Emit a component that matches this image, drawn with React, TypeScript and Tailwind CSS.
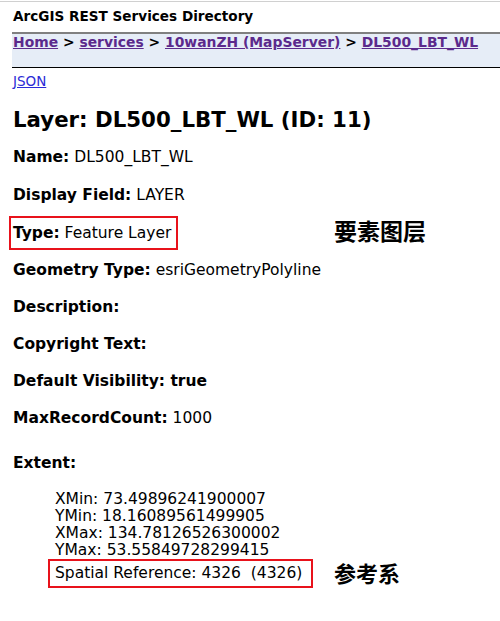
import React from "react";

const V = { fontFamily: '"DejaVu Sans", Verdana, sans-serif' };
const CJK = { fontFamily: '"Noto Sans CJK SC", sans-serif' };

function Row({ label, value }: { label: string; value?: string }) {
  return (
    <div className="text-[15.5px] leading-[17px] text-black whitespace-nowrap">
      <b>{label}</b>
      {value !== undefined ? <span> {value}</span> : null}
    </div>
  );
}

export default function App() {
  return (
    <div className="w-[500px] h-[621px] bg-white overflow-hidden" style={V}>
      <div className="h-px mt-px bg-[#d0d0d0]" />
      <div className="pl-[13px] pt-[6px] h-[30px] text-[13.6px] leading-[17px] font-bold text-black">
        ArcGIS REST Services Directory
      </div>
      <div className="ml-[12px] border-t-2 border-[#808080] border-b border-b-black bg-[#e6edf7] h-[36px] pl-px text-[13.9px] leading-[17px] font-bold whitespace-nowrap">
        <a className="underline text-[#5b2a8c]">Home</a>
        <span className="text-black"> &gt; </span>
        <a className="underline text-[#5b2a8c]">services</a>
        <span className="text-black"> &gt; </span>
        <a className="underline text-[#5b2a8c]">10wanZH (MapServer)</a>
        <span className="text-black"> &gt; </span>
        <a className="underline text-[#5b2a8c]">DL500_LBT_WL</a>
      </div>
      <div className="pl-[13px] pt-[6px] text-[13.5px] leading-[14px]">
        <a className="underline text-[#2b2bd6]">JSON</a>
      </div>
      <div className="pl-[13px] pt-[20px] text-[21.3px] leading-[24px] font-bold text-black whitespace-nowrap">
        Layer: DL500_LBT_WL (ID: 11)
      </div>
      <div className="pl-[13px] pt-[17px] flex flex-col gap-[21px]">
        <Row label="Name:" value="DL500_LBT_WL" />
        <Row label="Display Field:" value="LAYER" />
      </div>
      <div className="flex items-center mt-[12px] ml-[9px]">
        <div className="border-2 border-[#e8121b] w-[169px] h-[34px] flex items-center pl-[2px]">
          <Row label="Type:" value="Feature Layer" />
        </div>
        <div className="ml-[156px] -mt-[5px] text-[23px] font-bold text-black leading-none" style={CJK}>
          要素图层
        </div>
      </div>
      <div className="pl-[13px] pt-[12px] flex flex-col gap-[20px]">
        <Row label="Geometry Type:" value="esriGeometryPolyline" />
        <Row label="Description:" />
        <Row label="Copyright Text:" />
        <Row label="Default Visibility: true" />
        <Row label="MaxRecordCount:" value="1000" />
      </div>
      <div className="pl-[13px] pt-[28px]">
        <Row label="Extent:" />
      </div>
      <div className="pl-[55px] pt-[19px] text-[15.5px] leading-[17px] text-black whitespace-nowrap">
        <div>XMin: 73.49896241900007</div>
        <div>YMin: 18.16089561499905</div>
        <div>XMax: 134.78126526300002</div>
        <div>YMax: 53.55849728299415</div>
      </div>
      <div className="flex items-center ml-[48px]">
        <div className="border-2 border-[#e8121b] w-[265px] h-[29px] flex items-center pl-[5px] text-[15.5px] text-black whitespace-nowrap">
          Spatial Reference: 4326&nbsp; (4326)
        </div>
        <div className="ml-[21px] -mt-[4px] text-[22px] font-bold text-black leading-none" style={CJK}>
          参考系
        </div>
      </div>
    </div>
  );
}
